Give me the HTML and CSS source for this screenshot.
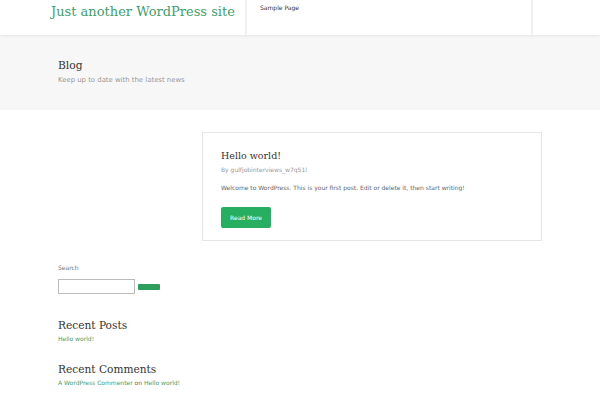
FILE: index.html
```html
<!DOCTYPE html>
<html>
<head>
<meta charset="utf-8">
<link rel="stylesheet" href="styles.css">
</head>
<body>
<header class="site-header">
  <div class="brand"><a class="site-title" href="#">Just another WordPress site</a></div>
  <nav class="nav"><a href="#">Sample Page</a></nav>
  <div class="nav-end"></div>
</header>
<section class="hero">
  <div class="wrap">
    <h1 class="hero-title">Blog</h1>
    <p class="hero-sub">Keep up to date with the latest news</p>
  </div>
</section>
<main class="wrap main">
  <div class="posts">
    <article class="card">
      <h2 class="post-title">Hello world!</h2>
      <p class="byline">By gulfjobinterviews_w7q51l</p>
      <p class="excerpt">Welcome to WordPress. This is your first post. Edit or delete it, then start writing!</p>
      <a class="btn" href="#">Read More</a>
    </article>
  </div>
  <aside class="sidebar">
    <div class="widget search">
      <label class="search-label">Search</label>
      <div class="search-row">
        <input class="search-input" type="text">
        <button class="search-btn"></button>
      </div>
    </div>
    <div class="widget">
      <h3 class="widget-title">Recent Posts</h3>
      <a class="link" href="#">Hello world!</a>
    </div>
    <div class="widget">
      <h3 class="widget-title">Recent Comments</h3>
      <p class="comment"><a class="link" href="#">A WordPress Commenter</a> on <a class="link" href="#">Hello world!</a></p>
    </div>
  </aside>
</main>
</body>
</html>
```
FILE: styles.css
```css
* { box-sizing: border-box; }
html, body { margin: 0; padding: 0; }
body {
  font-family: "DejaVu Sans", sans-serif;
  font-size: 6px;
  line-height: 8px;
  color: #555;
  background: #fff;
  width: 600px;
  overflow: hidden;
}
a { text-decoration: none; }
.site-header {
  display: flex;
  height: 35px;
  background: #fff;
  box-shadow: 0 1px 3px rgba(0,0,0,0.08);
  position: relative;
  z-index: 1;
}
.brand {
  width: 245px;
  padding-left: 51px;
  padding-top: 3px;
}
.site-title {
  font-family: "DejaVu Serif", serif;
  font-size: 13px;
  line-height: 17px;
  color: #3f9d6d;
  white-space: nowrap;
}
.nav {
  width: 288px;
  border-left: 2px solid #f0f0f0;
  border-right: 2px solid #f0f0f0;
  padding: 4px 13px;
}
.nav a { color: #333; font-size: 6px; }
.hero {
  background: #f7f7f7;
  height: 75px;
  padding-top: 24px;
}
.wrap {
  width: 484px;
  margin: 0 auto;
}
.hero-title {
  font-family: "DejaVu Serif", serif;
  font-weight: normal;
  font-size: 10.7px;
  line-height: 13px;
  color: #333;
  margin: 0 0 4px;
}
.hero-sub {
  margin: 0;
  color: #999;
  font-size: 6.9px;
  line-height: 8px;
}
.main { padding-top: 22px; }
.posts {
  display: flex;
  justify-content: flex-end;
}
.card {
  width: 340px;
  border: 1px solid #e6e6e6;
  padding: 17px 18px 12px;
}
.post-title {
  font-family: "DejaVu Serif", serif;
  font-weight: normal;
  font-size: 9.5px;
  line-height: 12px;
  color: #333;
  margin: 0 0 4px;
}
.byline { margin: 0 0 10px; color: #999; }
.excerpt { margin: 0 0 15px; color: #666; }
.btn {
  display: block;
  background: #27ae60;
  color: #fff;
  border-radius: 2px;
  width: 50px;
  height: 21px;
  line-height: 21px;
  text-align: center;
}
.sidebar { padding-top: 23px; }
.search-label { display: block; color: #777; margin-bottom: 7px; }
.search-row { display: flex; align-items: center; gap: 3px; }
.search-input {
  width: 77px;
  height: 15px;
  border: 1px solid #bbb;
  margin: 0;
  padding: 0;
}
.search-btn {
  width: 22px;
  height: 6px;
  background: #2e9e5e;
  border: 0;
  border-radius: 1px;
  padding: 0;
}
.widget { margin-bottom: 20px; }
.widget.search { margin-bottom: 25px; }
.widget-title {
  font-family: "DejaVu Serif", serif;
  font-weight: normal;
  font-size: 10.6px;
  line-height: 13px;
  color: #333;
  margin: 0 0 3px;
}
.link { color: #3f9d6d; }
.comment { margin: 0; color: #666; }
```
